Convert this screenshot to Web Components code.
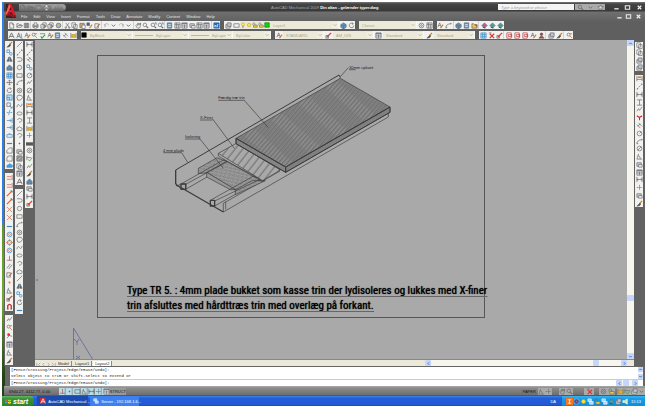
<!DOCTYPE html>
<html lang="da">
<head>
<meta charset="utf-8">
<title>AutoCAD Mechanical 2009</title>
<style>
  body {
    margin: 0;
    background: #fff;
    font-family: "Liberation Sans", Arial, sans-serif;
    font-size: 4px;
  }
</style>
</head>
<body>
<cad-desktop></cad-desktop>

<script>
// Small glyphs on an 8x8 grid. Default stroke is grey, no fill.
const GLYPHS = {
  new: '<path d="M2 1h3l1.5 1.5V7H2zM5 1v2h1.5"/>',
  open: '<path d="M1 6V2h2l1 1h2v1M1 6l1.5-2H7.5L6 6z"/>',
  save: '<path d="M1.5 1.5h5v5h-5z" fill="#b5bac5"/><path d="M3 1.5v2h2v-2M3 6.500v-2h2v2"/>',
  print: '<path d="M1 3h6v3H1z" fill="#aaa"/><path d="M2.5 3V1h3v2M2.5 5h3v2h-3z" fill="#fff"/>',
  view: '<path d="M1 3h4v4H1zM3 3V1h4v4H5"/><circle cx="5" cy="5" r="1.5"/>',
  globe: '<circle cx="4" cy="4" r="2.7" fill="#8bb5e2"/><path d="M2 4l2-2 2 3z" fill="#e5b83d" stroke="none"/>',
  cut: '<path d="M2 1l4 5M6 1L2 6"/><circle cx="2" cy="6.5" r=".8"/><circle cx="6" cy="6.5" r=".8"/>',
  copy: '<path d="M1 1h4v5H1zM3 3h4v4.500H3z" fill="#fff"/>',
  paste: '<path d="M1 1.5h5v5H1z" fill="#c9ad74"/><path d="M3.5 3.500H7v4H3.500z" fill="#fff"/>',
  brush: '<path d="M7 1L4 4" stroke="#c83" stroke-width="1.5"/><path d="M4.5 3.500L1 7l3-.5 1.5-2z" fill="#544"/>',
  bluebrush: '<path d="M1 1h3v3H1z" fill="#2d64a9"/><path d="M7 3L4 7" stroke="#d8802f" stroke-width="1.5"/>',
  edit: '<path d="M1 2h4v5H1z"/><path d="M7 2L3 6" stroke="#c63" stroke-width="1.2"/>',
  undo: '<path d="M2 6V3q3-3 5 1M1 3h2V5" stroke="#aaa"/>',
  redo: '<path d="M6 6V3q-3-3-5 1M7 3H5V5" stroke="#aaa"/>',
  pan: '<path d="M2 6L1 4l1-1 1 1V1.500h1V3l2-1v3L5 7H3z"/><path d="M6 1v2M5 2h2"/>',
  zoom: '<circle cx="3.3" cy="3.3" r="2"/><path d="M5 5l2 2" stroke-width="1.4"/>',
  zoomw: '<circle cx="3.3" cy="3.3" r="2"/><path d="M5 5l2 2" stroke-width="1.4"/><path d="M5.5 1H7v2" stroke="#2d64a9"/>',
  props: '<path d="M1.5 1h5v6h-5z" fill="#5b9bd0"/><path d="M2.5 3h3M2.5 5h3" stroke="#fff"/>',
  sheet: '<path d="M1 1h6v6H1z" fill="#dde8f0"/><path d="M1 3h6M3 1v6M5 3v4"/>',
  help: '<path d="M1 1h6v6H1z" fill="#246bb0" stroke="#246bb0"/><path d="M2 6V4h1.5v2M5 6V3h1" stroke="#fff"/>',
  a: '<path d="M1 7l3-6 3 6M2.2 5h3.6" stroke-width="1"/>',
  ablue: '<path d="M1 7l2-6 2 6M2 5h2" stroke-width=".9"/><path d="M6 2v5h1.5" stroke="#2f78c0"/>',
  apen: '<path d="M1 6l2-5 2 5M2 4h2"/><path d="M7 3L4 7" stroke="#d47b22" stroke-width="1.3"/>',
  find: '<circle cx="3" cy="3" r="1.7"/><path d="M4.5 4.500L7 7M4 2h3" stroke="#b96c28"/>',
  abc: '<path d="M1 2h6"/><path d="M2 5l1.5 2L7 3" stroke="#31a33c" stroke-width="1.2"/>',
  line: '<path d="M1 7l6-6"/>',
  lines: '<path d="M1 7l6-6" stroke-dasharray="2 1"/><path d="M1 7h1v-1M6 1h1v1"/>',
  pline: '<path d="M1 2h4q2 0 2 2t-2 2H2"/>',
  circle: '<circle cx="4" cy="4" r="2.5"/>',
  donut: '<circle cx="4" cy="4" r="2.7"/><circle cx="4" cy="4" r="1"/>',
  rect: '<path d="M1 2h6v4H1z"/>',
  arc: '<path d="M1 7q0-5 6-5"/><path d="M1 6h1v1M6 1.500h1v1"/>',
  poly: '<path d="M2 1.500h4l1.5 2.500L5 7H2L1 4z"/>',
  spline: '<path d="M1 6q1-5 3-2t3-2"/>',
  ellipse: '<ellipse cx="4" cy="4" rx="3" ry="1.8"/>',
  earc: '<path d="M1.5 3q2-2.500 5-.5 1 3-3 3.5"/>',
  block: '<path d="M1 2h5v4H1z" fill="#c8d3dc"/><path d="M3 4h4v3H3z" fill="#eee"/>',
  dot: '<circle cx="4" cy="4" r=".6" fill="#444"/>',
  hatch: '<path d="M1 1h6v6H1z" fill="#aaa"/><path d="M1 5l4-4M3 7l4-4"/>',
  cloud: '<path d="M1 5q-.5-2 1.5-2 1-2 3 0 2 0 1.5 2 0 2-3 1.5-3 .5-3-1.5z"/>',
  cloudblue: '<path d="M1 5q0-2 2-2 1-2 3 0 2 0 1 3H1z" fill="#4b9ed9" stroke="#3689c8"/>',
  table: '<path d="M1 1h6v6H1z" fill="#e6e8ee"/><path d="M1 2h6" stroke="#668" stroke-width="1.2"/><path d="M1 4.500h6M4 3v4"/>',
  blues: '<path d="M1 1h3v3H1z" stroke="#3689c8"/><circle cx="5.5" cy="5.5" r="1.5" stroke="#3689c8"/>',
  mirror: '<path d="M3.5 1v5H1zM4.500 1v5H7z" fill="#456b8c"/>',
  stamp: '<path d="M1 4l3-3 3 3v3H1z" fill="#5e88b0"/>',
  grid: '<path d="M1 1h6v6H1zM1 3h6M1 5h6M3 1v6M5 1v6" stroke="#3689c8"/>',
  move: '<path d="M4 1v6M1 4h6M3 2l1-1 1 1M3 6l1 1 1-1M2 3L1 4l1 1M6 3l1 1-1 1"/>',
  rotate: '<path d="M5.5 1.8A2.600 2.600 0 1 0 6.600 4M5 .5l1 1.5-1.5 1"/>',
  scale: '<path d="M1 1h6v6H1zM1 4h3v3" fill="#b9dcf2" stroke="#3689c8"/>',
  stretch: '<path d="M1 1h4v4H1z"/><path d="M4 4l3 3M7 5v2H5" stroke="#3689c8"/>',
  trim: '<path d="M1 4h2M5 4h2M4.500 1L3 7" stroke="#3689c8"/>',
  extend: '<path d="M1 4h5M4.500 2.500L6 4 4.500 5.500M7 1v6" stroke="#3689c8"/>',
  bar: '<path d="M1 4h6" stroke="#3689c8" stroke-width="1.3"/>',
  rectblue: '<path d="M1 3h6v3H1z" stroke="#3689c8"/><path d="M3 2h2"/>',
  chamfer: '<path d="M1 7V4l3-3h3v6z"/>',
  fillet: '<path d="M1 7V4q0-3 3-3h3v6z"/>',
  redline: '<path d="M1 3h5M1 6h5" stroke="#d65c35"/><path d="M7 1v6"/>',
  redarrow: '<path d="M1 7l6-6" stroke="#d65c35" stroke-width="1.2"/><path d="M5 1h2v2"/>',
  redx: '<path d="M1 1l6 6M7 1L1 7" stroke="#c46f50"/>',
  redcircle: '<circle cx="4" cy="4" r="2.5"/><path d="M4 0v3M4 5v3M0 4h3M5 4h3" stroke="#e07545"/>',
  bluecircle: '<circle cx="4" cy="4" r="2.7" stroke="#3689c8"/><circle cx="4" cy="4" r="1.2" stroke="#e07545"/>',
  perp: '<path d="M1 6h6M4 1v5" stroke="#ae5138"/>',
  para: '<path d="M1 6l4-5M3 7l4-5"/>',
  node: '<circle cx="4" cy="4" r=".9" fill="#e88b43" stroke="#e88b43"/>',
  magnet: '<path d="M2 7V3q2-3 4 0v4" stroke="#c22d2d" stroke-width="1.5"/><path d="M1 7h2M5 7h2"/>',
  hdim: '<path d="M1 1v6M7 1v6M1 4h6M2.500 3L1 4l1.5 1M5.500 3L7 4 5.500 5"/>',
  vdim: '<path d="M1 1h6M1 7h6M4 1v6"/>',
  adim: '<path d="M1 3l4 4M3 1l4 4M2 5l3-3"/>',
  radius: '<circle cx="4" cy="4" r="2.7"/><path d="M4 4l2-2"/>',
  dia: '<circle cx="4" cy="4" r="2.7"/><path d="M2 6l4-4"/>',
  angle: '<path d="M3 1L1 7h6M2 3q3 0 3 4"/>',
  jog: '<path d="M1 6l2-3 1 2 3-4"/>',
  power: '<path d="M1 1v6M7 1v6M1 5h6"/><path d="M2 2.500h4" stroke="#e4842d" stroke-width="1.8"/>',
  yellow: '<path d="M1 1v6M7 1v6"/><path d="M2 3h4v3H2z" fill="#e7bc2d" stroke="#b98d20"/>',
  tol: '<path d="M0 3h8v3H0z" fill="#555"/>',
  center: '<path d="M4 1v6M1 4h6" stroke-dasharray="2 .6"/>',
  check: '<path d="M1 1v5M1 3h5"/><path d="M3 5l1 2 3-4" stroke="#2aa836"/>',
  reddot: '<path d="M1 7l3-3 3 1"/><path d="M2 2h2v2H2z" fill="#e22" stroke="#e22"/>',
  redv: '<path d="M1 2l3 2 3-2M4 4v3" stroke="#d92222" stroke-width="1.2"/>',
  layers: '<path d="M1 3h5v4H1z" fill="#ddd"/><path d="M2.5 1H7v4H2.500z" fill="#b9c6da"/>',
  sun: '<circle cx="4" cy="4" r="2.3" fill="#ffe538" stroke="#bda729"/>',
  bulb: '<circle cx="4" cy="3" r="2" fill="#ffec70" stroke="#bda729"/><path d="M3 6h2M3 7h2"/>',
  lock: '<path d="M2 4h5v3H2z" fill="#e5ce37"/><path d="M1 4V2q1.5-2 3 0v2"/>',
  green: '<path d="M1 1h6v6H1z" fill="#0d0" stroke="#262"/>',
  black: '<path d="M1 1h6v6H1z" fill="#000" stroke="#000"/>',
  cube: '<path d="M1 3l3-2 3 2v3L4 8 1 6z" fill="#5993c9"/><path d="M1 3l3 1.5L7 3M4 4.500V8"/>',
  pink: '<path d="M1 4l3-3 3 3-3 3z" fill="#b55c9d"/><path d="M2 6l3 1" stroke="#246"/>',
  teal: '<path d="M1 4l3-3 3 3-3 3z" fill="#3e9fa6"/><path d="M2 6l3 1" stroke="#246"/>',
  folder: '<path d="M1 2h2l1 1h3v4H1z" fill="#efc04a"/><path d="M5 3l2 2" stroke="#c33" stroke-width="1.2"/>',
  redbox: '<path d="M1 1h5v6H1z" fill="#fff" stroke="#b33838"/><path d="M2.5 3h4v2h-4z" stroke="#b33838"/>',
  redpen: '<path d="M7 1L2 6" stroke="#d74b2e" stroke-width="1.6"/><path d="M1 4h3v3H1z"/>',
  redx2: '<path d="M2 2l5 5M7 2L2 7" stroke="#d33" stroke-width="1.3"/><path d="M1 1h3"/>',
  people: '<circle cx="4" cy="2.5" r="1.5" fill="#b33"/><path d="M1 7q3-5 6 0z" fill="#c53b2e"/>',
  down: '<path d="M2 3l2 2 2-2" stroke-width="1"/>',
  first: '<path d="M2 2v4M6 2L4 4l2 2"/>',
  prev: '<path d="M5 2L3 4l2 2"/>',
  next: '<path d="M3 2l2 2-2 2"/>',
  last: '<path d="M2 2l2 2-2 2M6 2v4"/>',
  up: '<path d="M2 5l2-2 2 2" stroke="#235ab8" stroke-width="1.3"/>',
  dn: '<path d="M2 3l2 2 2-2" stroke="#235ab8" stroke-width="1.3"/>',
  left: '<path d="M5 2L3 4l2 2" stroke="#235ab8" stroke-width="1.3"/>',
  right: '<path d="M3 2l2 2-2 2" stroke="#235ab8" stroke-width="1.3"/>',
  min: '<path d="M1.5 5.500h5" stroke="#eee" stroke-width="1.5"/>',
  max: '<path d="M1.5 2h5v4h-5z" stroke="#eee" stroke-width="1.2"/>',
  close: '<path d="M2 2l4 4M6 2L2 6" stroke="#eee" stroke-width="1.4"/>',
  star: '<path d="M4 1l1 2h2L5.500 4.500 6 7 4 5.500 2 7l.5-2.500L1 3h2z" fill="#ddd"/>',
  flag: '<path d="M0 2q2-1 3.5 0v2Q2 3 0 4z" fill="#f25a23" stroke="none"/><path d="M4 2q2 1 4 0v2q-2 1-4 0z" fill="#8cdb46" stroke="none"/><path d="M0 5q2-1 3.5 0v2Q2 6 0 7z" fill="#4f9cf5" stroke="none"/><path d="M4 5q2 1 4 0v2q-2 1-4 0z" fill="#ffda3d" stroke="none"/>',
  acad: '<path d="M0 0h8v8H0z" fill="#c42b30" stroke="none"/><path d="M1 7l3-6 3 6M2 5h4" stroke="#fff" stroke-width="1"/>',
  server: '<path d="M1 1h4v3H1zM3 4h4v3H3z" fill="#aad4ff" stroke="#eef"/>',
  orange: '<path d="M0 0h8v8H0z" fill="#ee7526" stroke="none"/><path d="M2 2h4M4 2v4M2 6h4" stroke="#fff"/>',
  shield: '<circle cx="4" cy="4" r="3" fill="#224c9b" stroke="#9bd"/><path d="M3 3h2v2H3z" fill="#e55" stroke="none"/>',
  speaker: '<path d="M1 3h2l3-2v6L3 5H1z" fill="#d8e4a0" stroke="#efe"/>'
};

const icon = name =>
  `<svg viewBox="0 0 8 8" fill="none" stroke="#6c6c6c" stroke-width=".8" aria-hidden="true">${GLYPHS[name] || ''}</svg>`;

// Strip of tool buttons. "|" in the tool list is a separator.
class CadTools extends HTMLElement {
  connectedCallback() {
    const tools = this.getAttribute('tools').trim().split(/\s+/);
    this.attachShadow({ mode: 'open' });
    this.shadowRoot.innerHTML = `
      <style>
        :host {
          display: flex;
          flex: 1;
          min-width: 0;
          min-height: 0;
          background: var(--tools-bg, #f1f1ef);
        }
        :host([vertical]) { flex-direction: column; }
        button {
          display: grid;
          place-items: center;
          flex: 1 1 0;
          min-width: 0;
          min-height: 0;
          margin: 0;
          padding: 0;
          border: 0;
          background: var(--button-bg, none);
        }
        svg { display: block; width: 7px; height: 7px; }
        i { flex: 0 0 2px; }
        i::before {
          content: "";
          display: block;
          width: 1px;
          height: 100%;
          background: #d2d2ce;
        }
      </style>
      ${tools.map(t => t === '|' ? '<i></i>' : `<button type="button" aria-label="${t}">${icon(t)}</button>`).join('')}
    `;
  }
}

class CadSelect extends HTMLElement {
  connectedCallback() {
    const lead = (this.getAttribute('lead') || '').split(' ').filter(Boolean);
    this.attachShadow({ mode: 'open' });
    this.shadowRoot.innerHTML = `
      <style>
        :host {
          display: flex;
          align-items: center;
          min-width: 0;
          background: #ece9d8;
          border-right: 1px solid #f8f7f0;
          box-sizing: border-box;
        }
        svg { display: block; flex: none; width: 6px; height: 6px; }
        hr { flex: 0 0 18px; margin: 0 0 0 2px; border: 0; border-top: 1px solid #b9b6a4; }
        select {
          flex: 1;
          min-width: 0;
          height: 7px;
          margin: 0;
          padding: 0 0 0 3px;
          border: 0;
          appearance: none;
          background: none;
          color: #aaa793;
          font: inherit;
        }
        svg:last-child { background: #f5f3e8; opacity: 0.5; }
      </style>
      ${lead.map(icon).join('')}${this.hasAttribute('rule') ? '<hr>' : ''}
      <select aria-label="${this.getAttribute('label')}"><option>${this.getAttribute('value')}</option></select>
      ${icon('down')}
    `;
  }
}

class CadTitle extends HTMLElement {
  connectedCallback() {
    const menus = ['File', 'Edit', 'View', 'Insert', 'Format', 'Tools', 'Draw', 'Annotate', 'Modify', 'Content', 'Window', 'Help'];
    this.attachShadow({ mode: 'open' });
    this.shadowRoot.innerHTML = `
      <style>
        :host {
          display: grid;
          grid-template-columns: 12px 1fr;
          background: linear-gradient(#777 0, #444 2px, #393939 9px, #707070 10px, #616161 19px);
          color: #ddd;
        }
        .logo { width: 11px; height: 16px; margin: 1px 0 0 1px; }
        .bar {
          display: grid;
          grid-template-columns: 50fr 205fr 117fr 110fr 76fr 37fr 34fr;
          align-items: center;
          height: 10px;
        }
        .quick {
          --tools-bg: linear-gradient(#a0a0a0, #666);
          height: 7px;
          margin-left: 3px;
          border-radius: 0 4px 4px 0;
        }
        .title { grid-column: 3; white-space: nowrap; color: #aaa; }
        .title b { color: #fff; }
        input {
          grid-column: 5;
          box-sizing: border-box;
          width: 100%;
          height: 6px;
          margin: 0;
          padding: 0 3px;
          border: 0;
          background: #f4f4f4;
          font: italic 4px "Liberation Sans", Arial, sans-serif;
        }
        input::placeholder { color: #999; }
        .find { --tools-bg: #aaa; height: 6px; margin: 0 6px 0 1px; }
        .win { --tools-bg: none; height: 8px; }
        nav { display: flex; align-items: center; gap: 6px; height: 9px; padding-left: 5px; }
        nav a { color: #e0e0e0; text-decoration: none; }
        nav cad-tools { --tools-bg: none; flex: 0 0 28px; height: 7px; margin: 0 2px 0 auto; }
      </style>
      <svg class="logo" viewBox="0 0 22 32" aria-label="AutoCAD">
        <path d="M2 2h12l8 28H2z" fill="#3e2020"/>
        <path d="M0 26L8 2h5l9 23-6-1-2-5H7l-2 6z" fill="#d51f2b"/>
        <path d="M9 14l2-6 2 6z" fill="#521014"/>
        <path d="M8 2l3 5-7 16-4 3z" fill="#f15b60"/>
        <path d="M0 26l7-7 9 5 6 1-5 4-7-4z" fill="#a01420"/>
      </svg>
      <div>
        <div class="bar">
          <cad-tools class="quick" tools="new open save print undo redo"></cad-tools>
          <div class="title">AutoCAD Mechanical 2009 <b>Din altan - gelænder typer.dwg</b></div>
          <input type="text" aria-label="Search" placeholder="Type a keyword or phrase">
          <cad-tools class="find" tools="zoom down star"></cad-tools>
          <cad-tools class="win" tools="min max close"></cad-tools>
        </div>
        <nav>
          ${menus.map(m => `<a href="#">${m}</a>`).join('')}
          <cad-tools tools="min max close"></cad-tools>
        </nav>
      </div>
    `;
  }
}

class CadToolbars extends HTMLElement {
  connectedCallback() {
    this.attachShadow({ mode: 'open' });
    this.shadowRoot.innerHTML = `
      <style>
        :host {
          display: grid;
          gap: 2px;
          padding: 0 0 1px 4px;
          background: #5f5f5f;
        }
        .row { display: grid; gap: 4px; height: 8px; }
        .one { grid-template-columns: 212fr 131fr 74fr 67fr 137fr; }
        .two { grid-template-columns: 69fr 190fr 200fr 94fr 68fr; }
        .group { display: grid; min-width: 0; background: #f1f1ef; }
        .layer { grid-template-columns: 16fr 99fr 16fr; }
        .space { grid-template-columns: 58fr 16fr; }
        .props { grid-template-columns: 52fr 56fr 44fr 38fr; }
        .styles { grid-template-columns: 8fr 41fr 9fr 41fr 9fr 41fr 10fr 41fr; }
      </style>
      <div class="row one">
        <cad-tools tools="new open save | print view view globe | cut copy paste bluebrush edit | undo down redo down | pan zoom zoomw zoomw | props sheet table block sheet table | help"></cad-tools>
        <div class="group layer">
          <cad-tools tools="layers rect"></cad-tools>
          <cad-select lead="bulb sun lock lock green" label="Layer" value="Layer1"></cad-select>
          <cad-tools tools="cube rotate"></cad-tools>
        </div>
        <div class="group space">
          <cad-select label="Workspace" value="Classic"></cad-select>
          <cad-tools tools="donut sheet"></cad-tools>
        </div>
        <cad-tools tools="apen arc | cube props folder | pink teal teal"></cad-tools>
      </div>
      <div class="row two">
        <cad-tools tools="a ablue apen find abc apen props adim yellow"></cad-tools>
        <div class="group props">
          <cad-select lead="black" label="Color" value="ByBlock"></cad-select>
          <cad-select rule label="Linetype" value="ByLayer"></cad-select>
          <cad-select rule label="Lineweight" value="ByLayer"></cad-select>
          <cad-select label="Plot style" value="ByColor"></cad-select>
        </div>
        <div class="group styles">
          <cad-tools tools="apen"></cad-tools>
          <cad-select label="Text style" value="STANDARD"></cad-select>
          <cad-tools tools="redpen"></cad-tools>
          <cad-select label="Dimension style" value="AM_DIN"></cad-select>
          <cad-tools tools="table"></cad-tools>
          <cad-select label="Table style" value="Standard"></cad-select>
          <cad-tools tools="brush"></cad-tools>
          <cad-select label="Leader style" value="Standard"></cad-select>
        </div>
        <cad-tools tools="grid redx2 redpen | redbox redbox redbox apen people | layers brush | find"></cad-tools>
      </div>
    `;
  }
}

// Column of docked palettes; each slotted strip carries its own flex weight.
class CadDock extends HTMLElement {
  connectedCallback() {
    this.attachShadow({ mode: 'open' });
    this.shadowRoot.innerHTML = `
      <style>
        :host {
          display: flex;
          flex-direction: column;
          flex: 0 0 8px;
          gap: 4px;
          min-height: 0;
        }
      </style>
      <slot></slot>
    `;
  }
}

class CadScroll extends HTMLElement {
  connectedCallback() {
    const v = this.hasAttribute('vertical');
    this.attachShadow({ mode: 'open' });
    this.shadowRoot.innerHTML = `
      <style>
        :host { display: flex; justify-content: space-between; background: #f6f5ee; }
        :host([vertical]) { flex-direction: column; }
        button, span {
          flex: 0 0 6px;
          margin: 0;
          padding: 0;
          border: 0;
          border-radius: 1px;
          background: #c6d6fb;
        }
        button { display: grid; place-items: center; }
        :host([short]) button { flex-basis: 5px; }
        svg { display: block; width: 5px; height: 5px; }
        i { flex: var(--before, 0); }
        i ~ i { flex: var(--after, 0); }
      </style>
      <button type="button" aria-label="Scroll back">${icon(v ? 'up' : 'left')}</button>
      ${this.hasAttribute('short') ? '' : '<i></i><span></span><i></i>'}
      <button type="button" aria-label="Scroll forward">${icon(v ? 'dn' : 'right')}</button>
    `;
  }
}

class CadDrawing extends HTMLElement {
  connectedCallback() {
    this.attachShadow({ mode: 'open' });
    this.shadowRoot.innerHTML = `
      <style>
        :host {
          display: block;
          position: relative;
          min-width: 0;
          background: #a9a9a9;
          overflow: hidden;
        }
        .sheet {
          margin: 15px 142px 0 62px;
          height: 261px;
          border: 1px solid #565656;
        }
        .model { display: block; width: 100%; height: 227px; }
        .model text { font: 12px "Liberation Sans", Arial, sans-serif; fill: #222; stroke: none; }
        p {
          margin: 0 0 0 29px;
          font: 11px/15px "Roboto Condensed", "Liberation Sans Narrow", "Liberation Sans", sans-serif;
          color: #000;
          text-shadow: 0 0 1px #000;
          white-space: nowrap;
        }
        u { text-decoration: underline 1px #666; text-underline-offset: 2px; }
        .ucs { display: block; width: 24px; height: 32px; margin: 9px 0 0 37px; }
        .grip {
          position: absolute;
          left: 1px;
          top: 239px;
          width: 2px;
          height: 2px;
          border: 1px solid #888;
          box-sizing: border-box;
        }
      </style>
      <div class="sheet">
        <svg class="model" viewBox="-171 3 1155 681" preserveAspectRatio="xMinYMin meet" fill="none" stroke="#3c3c3c" stroke-width="2" stroke-linejoin="round">
          <defs>
            <pattern id="wood" width="10" height="90" patternUnits="userSpaceOnUse" patternTransform="rotate(41)">
              <path d="M0 0h10v90H0z" fill="#8b8b8b" stroke="none"/>
              <path d="M2 0v90" stroke="#555"/>
              <path d="M7 8v54" stroke="#6c6c6c"/>
            </pattern>
            <pattern id="ply" width="18" height="18" patternUnits="userSpaceOnUse" patternTransform="rotate(38)">
              <path d="M0 0h18v18H0z" fill="#a9a9a9" stroke="none"/>
              <path d="M3 0v18" stroke="#4c4c4c"/>
            </pattern>
            <pattern id="wool" width="13" height="10" patternUnits="userSpaceOnUse" patternTransform="rotate(12)">
              <path d="M0 0h13v10H0z" fill="#a0a0a0" stroke="none"/>
              <path d="M0 2l4 2 4-4 4 3M1 8l4-3 5 3M8 4l4 2" stroke="#5c5c5c" stroke-width="1.2"/>
            </pattern>
          </defs>
          <path d="M62 345L552 60l4 8" stroke-width="3"/>
          <path d="M62 345v40q1 6 8 8l135 78" stroke-width="4"/>
          <path d="M205 471L700 186v-14M205 471v-26l7-4v22M212 441l163-93"/>
          <path d="M130 340l56-32 30 12-56 33-30 3z" fill="url(#wool)"/>
          <path d="M155 352l60-33 110 58-85 27z" fill="url(#wool)"/>
          <path d="M155 352v14l73 39 12-2z" fill="#979797"/>
          <path d="M241 405l50-28 40 0-90 42z" fill="url(#wool)"/>
          <path d="M78 387l127-72 12 5-125 68v15l64-37M70 391l8-4h14v16H78z"/>
          <path d="M78 387h14v16H78zM166 436h13v17h-13z" stroke-width="4"/>
          <path d="M166 436l128-72 23 8-138 66M179 453l62-35"/>
          <path d="M190 295l54-30 132 80-53 32z" fill="url(#ply)"/>
          <path d="M190 295v8l130 76 6-2"/>
          <path d="M243 250l149 86v16l-149-86z" fill="#858585"/>
          <path d="M392 336l313-180v16L392 352z" fill="#808080"/>
          <path d="M243 250L556 70l149 86-313 180z" fill="url(#wood)"/>
          <path d="M243 250l149 86 313-180v16L392 352l-149-86zM392 336v16" stroke-width="3"/>
          <path d="M580 38l-24 27M266 134l74 84M173 192l65 88M135 252l70 88M80 293l18 29"/>
          <path d="M190 136h76M135 195h38M90 252h45M25 293h55M582 44h20"/>
          <text x="582" y="41">30mm upkant</text>
          <text x="190" y="133">Færdig træ trin</text>
          <text x="135" y="192">X-Finer</text>
          <text x="90" y="250">Isolering</text>
          <text x="24" y="291">4 mm plade</text>
        </svg>
        <p><u>Type TR 5. : 4mm plade bukket som kasse trin der lydisoleres og lukkes med X-finer</u><br>
        <u>trin afsluttes med hårdttræs trin med overlæg på forkant.</u></p>
      </div>
      <svg class="ucs" viewBox="0 0 24 32" fill="none" stroke="#71719e" stroke-width="1" aria-hidden="true">
        <path d="M1.5 32V1l19 31M2 12l3 3 2-3M5 15v3M4 29l4 3M8 29l-4 3"/>
      </svg>
      <div class="grip"></div>
    `;
  }
}

class CadTabs extends HTMLElement {
  connectedCallback() {
    this.attachShadow({ mode: 'open' });
    this.shadowRoot.innerHTML = `
      <style>
        :host {
          display: grid;
          grid-template-columns: 391fr 202fr 7px;
          height: 7px;
          border-top: 1px solid #888;
          box-sizing: border-box;
          background: #ece9d8;
        }
        nav { display: flex; align-items: center; gap: 1px; }
        a {
          padding: 0 2px;
          border-right: 1px solid #888;
          color: #333;
          line-height: 5px;
          text-decoration: none;
        }
        a[aria-current] { background: #fff; }
        .nav { --tools-bg: none; flex: 0 0 20px; height: 5px; opacity: 0.6; }
        .h { --before: 160; --after: 22; }
      </style>
      <nav>
        <cad-tools class="nav" tools="first prev next last"></cad-tools>
        <a href="#">Model</a><a href="#">Layout1</a><a href="#" aria-current="page">Layout2</a>
      </nav>
      <cad-scroll class="h"></cad-scroll>
    `;
  }
}

class CadCommand extends HTMLElement {
  connectedCallback() {
    this.attachShadow({ mode: 'open' });
    this.shadowRoot.innerHTML = `
      <style>
        :host {
          display: grid;
          grid-template-columns: 1fr 5px;
          margin-left: 1px;
          border: solid #666;
          border-width: 1px 2px 0 5px;
          background: #fff;
          font-family: "Liberation Mono", "Courier New", monospace;
          color: #222;
        }
        .log { height: 12px; padding-left: 1px; line-height: 6px; white-space: nowrap; }
        .prompt {
          display: flex;
          grid-column: 1 / -1;
          height: 6px;
          padding: 0 5px 0 1px;
          border-top: 1px solid #ccc;
        }
        label { line-height: 6px; }
        input { flex: 1; min-width: 0; height: 5px; margin: 0; padding: 0; border: 0; outline: 0; font: inherit; }
        .h { flex: 0 0 22px; --before: 1; --after: 5; }
      </style>
      <div class="log">[Fence/Crossing/Project/Edge/eRase/Undo]:<br>Select object to trim or shift-select to extend or</div>
      <cad-scroll vertical short></cad-scroll>
      <div class="prompt">
        <label for="cmd">[Fence/Crossing/Project/Edge/eRase/Undo]:</label>
        <input id="cmd" type="text">
        <cad-scroll class="h"></cad-scroll>
      </div>
    `;
  }
}

class CadStatus extends HTMLElement {
  connectedCallback() {
    this.attachShadow({ mode: 'open' });
    this.shadowRoot.innerHTML = `
      <style>
        :host {
          display: grid;
          grid-template-columns: 55fr 51fr 16fr 395fr 18fr 14fr 7fr 14fr 11fr 10fr 5fr 16fr 2fr 28fr;
          align-items: center;
          height: 10px;
          background: linear-gradient(#aaa 0, #8b8b8b 2px, #6e6e6e 9px, #3b4230 10px);
          color: #111;
        }
        cad-tools { height: 7px; --tools-bg: #aaa; }
        .modes { --button-bg: linear-gradient(90deg, #b8dde8 70%, #999 100%); }
        .coords { padding-left: 5px; white-space: nowrap; }
        button {
          height: 7px;
          margin: 0;
          padding: 0;
          border: 0;
          background: #999;
          color: #111;
          font: inherit;
          line-height: 7px;
        }
        .paper { grid-column: 5; background: none; }
        .zoom { grid-column: 8; }
        .lock { grid-column: 10; }
        .ws { grid-column: 12; }
        .tray { grid-column: 14; }
      </style>
      <span class="coords">6940.27, 4412.77, 0.00</span>
      <cad-tools class="modes" tools="perp dot rect angle hdim center table"></cad-tools>
      <button type="button">STRUCT</button>
      <button type="button" class="paper">PAPER</button>
      <cad-tools tools="angle center"></cad-tools>
      <cad-tools class="zoom" tools="pan zoom"></cad-tools>
      <cad-tools class="lock" tools="redx2"></cad-tools>
      <cad-tools class="ws" tools="donut lock"></cad-tools>
      <cad-tools class="tray" tools="yellow check layers down"></cad-tools>
    `;
  }
}

class CadTaskbar extends HTMLElement {
  connectedCallback() {
    this.attachShadow({ mode: 'open' });
    this.shadowRoot.innerHTML = `
      <style>
        :host {
          display: grid;
          grid-template-columns: 33fr 3fr 52fr 2fr 50fr 431fr 72fr;
          height: 10px;
          background: linear-gradient(#3e87e8 0, #245fdc 2px, #2159d2 9px, #1a45a8 10px);
          color: #fff;
        }
        button {
          display: flex;
          align-items: center;
          gap: 2px;
          min-width: 0;
          margin: 0;
          padding: 0 3px;
          border: 0;
          background: none;
          color: #fff;
          font: inherit;
          white-space: nowrap;
        }
        svg { display: block; flex: none; width: 6px; height: 6px; }
        .start {
          border-radius: 0 4px 4px 0;
          background: linear-gradient(#66b566, #379037 3px, #2f822f);
          font: italic bold 7px "Liberation Sans", Arial, sans-serif;
        }
        .app { grid-column: 3; background: #1c4bb0; }
        .srv { grid-column: 5; background: #3d80f0; }
        .lang { justify-self: end; align-self: center; padding-right: 6px; }
        .tray {
          display: flex;
          align-items: center;
          gap: 2px;
          padding: 0 4px;
          background: linear-gradient(#38b4f3, #169be4 3px, #138dd8);
        }
        .tray cad-tools { --tools-bg: none; height: 7px; }
      </style>
      <button type="button" class="start">${icon('flag')}start</button>
      <button type="button" class="app">${icon('acad')}AutoCAD Mechanical ...</button>
      <button type="button" class="srv">${icon('server')}Server - 192.168.1.6...</button>
      <span class="lang">DA</span>
      <div class="tray">
        <cad-tools tools="orange shield sun server lock server teal layers speaker"></cad-tools>
        <span>15:13</span>
      </div>
    `;
  }
}

class CadDesktop extends HTMLElement {
  connectedCallback() {
    this.attachShadow({ mode: 'open' });
    this.shadowRoot.innerHTML = `
      <style>
        :host {
          display: flex;
          flex-direction: column;
          box-sizing: border-box;
          min-height: 100vh;
          padding: 2px;
        }
        .app {
          display: flex;
          flex-direction: column;
          flex: 1;
          padding-left: 2px;
          background: linear-gradient(#2f7fe6 56%, #5f9a24 57%, #6fae2c 75%, #24421a 95%);
        }
        main { display: flex; flex: 1; background: #626262; }
        .left { display: flex; flex: 0 0 27px; gap: 2px; padding: 1px 2px 1px 1px; }
        .work {
          display: grid;
          flex: 1;
          grid-template-columns: 1fr 7px;
          grid-template-rows: 1fr 7px;
          min-width: 0;
        }
        cad-tabs { grid-column: 1 / -1; }
        .v { --before: 247; --after: 52; }
        .right { flex: 0 0 8px; margin: 2px 2px 0 1px; }
      </style>
      <div class="app">
        <cad-title></cad-title>
        <cad-toolbars></cad-toolbars>
        <main>
          <div class="left">
            <cad-dock>
              <cad-tools vertical style="flex: 126" tools="brush blues mirror stamp grid move rotate scale stretch trim extend extend rectblue bar chamfer fillet cloudblue"></cad-tools>
              <cad-tools vertical style="flex: 135" tools="redline redline redarrow redarrow redx redx bar bluecircle redcircle bluecircle perp para edit node angle redpen magnet"></cad-tools>
              <cad-tools vertical style="flex: 49" tools="jog find reddot table angle brush"></cad-tools>
            </cad-dock>
            <cad-dock>
              <cad-tools vertical style="flex: 141" tools="line lines pline circle rect arc donut poly spline ellipse earc cloud earc dot block hatch copy table a"></cad-tools>
              <cad-tools vertical style="flex: 122" tools="line pline circle rect arc donut poly spline ellipse earc cloud line mirror blues rotate bar"></cad-tools>
              <div style="flex: 46"></div>
            </cad-dock>
            <cad-dock>
              <cad-tools vertical style="flex: 165" tools="hdim lines adim blues radius jog dia angle power hdim vdim yellow center tol donut check jog brush stamp block hdim redpen"></cad-tools>
              <div style="flex: 152"></div>
            </cad-dock>
          </div>
          <div class="work">
            <cad-drawing></cad-drawing>
            <cad-scroll class="v" vertical></cad-scroll>
            <cad-tabs></cad-tabs>
          </div>
          <cad-dock class="right">
            <cad-tools vertical style="flex: 29" tools="copy copy layers layers"></cad-tools>
            <cad-tools vertical style="flex: 132" tools="power lines hdim vdim jog redv adim radius arc dia angle block table hdim center block brush"></cad-tools>
            <div style="flex: 155"></div>
          </cad-dock>
        </main>
        <cad-command></cad-command>
        <cad-status></cad-status>
      </div>
      <cad-taskbar></cad-taskbar>
    `;
  }
}

customElements.define('cad-tools', CadTools);
customElements.define('cad-select', CadSelect);
customElements.define('cad-title', CadTitle);
customElements.define('cad-toolbars', CadToolbars);
customElements.define('cad-dock', CadDock);
customElements.define('cad-scroll', CadScroll);
customElements.define('cad-drawing', CadDrawing);
customElements.define('cad-tabs', CadTabs);
customElements.define('cad-command', CadCommand);
customElements.define('cad-status', CadStatus);
customElements.define('cad-taskbar', CadTaskbar);
customElements.define('cad-desktop', CadDesktop);
</script>
</body>
</html>
